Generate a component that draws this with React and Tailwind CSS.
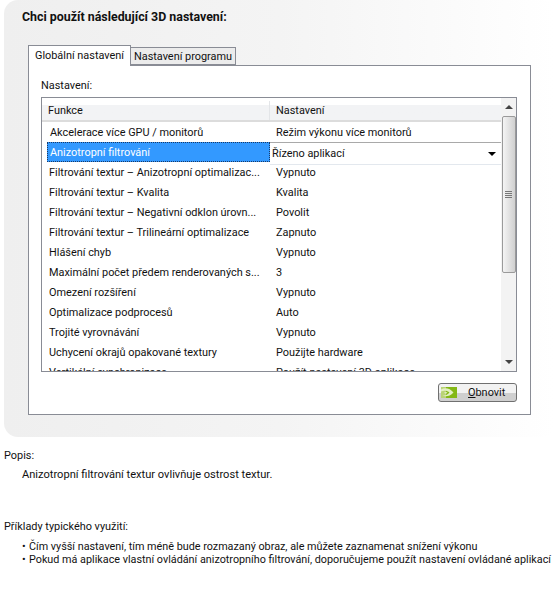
import React from 'react'

const rows = [
  ['Filtrování textur – Anizotropní optimalizac...', 'Vypnuto'],
  ['Filtrování textur – Kvalita', 'Kvalita'],
  ['Filtrování textur – Negativní odklon úrovn...', 'Povolit'],
  ['Filtrování textur – Trilineární optimalizace', 'Zapnuto'],
  ['Hlášení chyb', 'Vypnuto'],
  ['Maximální počet předem renderovaných s...', '3'],
  ['Omezení rozšíření', 'Vypnuto'],
  ['Optimalizace podprocesů', 'Auto'],
  ['Trojité vyrovnávání', 'Vypnuto'],
  ['Uchycení okrajů opakované textury', 'Použijte hardware'],
  ['Vertikální synchronizace', 'Použít nastavení 3D aplikace'],
]

const Row = ({ name, value }) => (
  <div className="flex h-5 shrink-0 items-center pt-px">
    <div className="w-[228px] shrink-0 whitespace-nowrap pl-[7px]">{name}</div>
    <div className="whitespace-nowrap pl-[6px]">{value}</div>
  </div>
)

const NvidiaIcon = () => (
  <svg width="16" height="11" viewBox="0 0 16 11" className="shrink-0">
    <rect width="16" height="11" fill="#84b816" />
    <rect width="5" height="11" fill="#b9d376" />
    <path d="M0 2.500C4 0 9 1 12.500 5.500C9 9.500 4 10 1.500 8.500C4 8.500 6.500 8 8.500 5.500C6.500 3.500 3 3 0 4.500Z" fill="#e3efc4" />
    <path d="M3 5.500C4.500 4.500 6 5 6.500 5.500C5.500 7 4 7 3 5.500Z" fill="#e3efc4" />
  </svg>
)

const App = () => {
  return (
    <div className="h-[603px] w-[558px] overflow-hidden bg-white font-['Roboto',sans-serif] text-[10.9px] leading-4 text-[#111]">
      <div className="ml-1 mr-[3px] h-[437px] rounded-[14px] bg-gradient-to-r from-[#efefef] via-[#f4f4f4] to-white pl-[18px] pt-[9px]">
        <div className="h-[15px] text-[12.4px] font-bold">Chci použít následující 3D nastavení:</div>

        <div className="mt-[21px] ml-[6px] flex h-[20px] items-end">
          <div className="z-10 -mb-px flex h-[21px] w-[103px] items-start justify-center whitespace-nowrap border border-b-0 border-[#898c95] bg-white pt-[2px]">
            Globální nastavení
          </div>
          <div className="flex h-[18px] w-[105px] items-center justify-center whitespace-nowrap border border-l-0 border-[#898c95] bg-[#ececec] pt-px">
            Nastavení programu
          </div>
        </div>

        <div className="ml-[6px] h-[350px] w-[503px] border border-[#898c95] bg-white pl-[12px] pt-[12px]">
          <div className="h-[15px] leading-[15px]">Nastavení:</div>
          <div className="mt-[4px] flex h-[275px] w-[476px] overflow-hidden border border-[#898c95] bg-white">
            <div className="flex w-[459px] flex-col overflow-hidden">
              <div className="flex h-[24px] shrink-0 items-center border-b-2 border-[#dcdcdc] bg-gradient-to-b from-white from-30% to-[#f2f3f5] to-30% pt-[3px]">
                <div className="flex h-full w-[228px] items-center border-r border-[#e3e5e8] pl-[6px]">Funkce</div>
                <div className="pl-[6px]">Nastavení</div>
              </div>
              <div className="flex h-[20px] shrink-0 items-center pt-px">
                <div className="w-[228px] whitespace-nowrap pl-2">Akcelerace více GPU / monitorů</div>
                <div className="pl-[6px]">Režim výkonu více monitorů</div>
              </div>
              <div className="relative flex h-[20px] shrink-0">
                <div className="ml-[5px] flex h-[20px] w-[223px] items-center border border-dotted border-[#1a3a66] bg-[#3399ff] pl-[2px] pt-[2px] text-white">
                  Anizotropní filtrování
                </div>
                <div className="absolute left-[228px] right-0 top-0 z-10 flex h-[23px] items-center justify-between border-y border-t-[#a9a9a9] border-b-[#e3e8ee] bg-white pl-[2px] pr-[5px]">
                  <span>Řízeno aplikací</span>
                  <span className="h-0 w-0 border-x-[4px] border-t-[4px] border-x-transparent border-t-black" />
                </div>
              </div>
              {rows.map((r) => (
                <Row key={r[0]} name={r[0]} value={r[1]} />
              ))}
            </div>
            <div className="flex w-[15px] flex-col items-center bg-[#f3f3f3]">
              <div className="flex h-[18px] items-center">
                <span className="h-0 w-0 border-x-[4px] border-b-[4px] border-x-transparent border-b-[#444]" />
              </div>
              <div className="flex h-[157px] w-[14px] items-center justify-center rounded-[2px] border border-[#9a9a9a] bg-gradient-to-r from-[#f4f4f4] to-[#d0d0d0]">
                <div className="flex w-[7px] flex-col gap-px">
                  <span className="h-px bg-[#777]" />
                  <span className="h-px bg-[#777]" />
                  <span className="h-px bg-[#777]" />
                  <span className="h-px bg-[#777]" />
                </div>
              </div>
              <div className="flex-1" />
              <div className="flex h-[18px] items-center">
                <span className="h-0 w-0 border-x-[4px] border-t-[4px] border-x-transparent border-t-[#444]" />
              </div>
            </div>
          </div>
          <div className="mt-[11px] flex w-[476px] justify-end">
            <button className="flex h-[19px] w-[79px] items-center rounded-[3px] border border-[#707070] bg-gradient-to-b from-[#f2f2f2] from-50% to-[#cfcfcf] to-50% pl-[2px]">
              <NvidiaIcon />
              <span className="ml-[11px]"><span className="underline">O</span>bnovit</span>
            </button>
          </div>
        </div>
      </div>

      <div className="ml-1 mt-[11px] h-4">Popis:</div>
      <div className="ml-[22px] mt-[3px] h-4 text-[11.1px]">Anizotropní filtrování textur ovlivňuje ostrost textur.</div>
      <div className="ml-1 mt-[36px] h-4">Příklady typického využití:</div>
      <ul className="ml-[22px] mt-[5px] text-[10.8px] leading-[13px]">
        <li className="flex whitespace-nowrap"><span className="w-[7px] shrink-0">•</span>Čím vyšší nastavení, tím méně bude rozmazaný obraz, ale můžete zaznamenat snížení výkonu</li>
        <li className="flex whitespace-nowrap"><span className="w-[7px] shrink-0">•</span>Pokud má aplikace vlastní ovládání anizotropního filtrování, doporučujeme použít nastavení ovládané aplikací</li>
      </ul>
    </div>
  )
}

export default App
